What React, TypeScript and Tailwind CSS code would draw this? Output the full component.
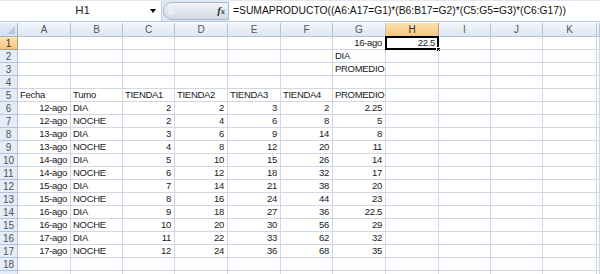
import React from 'react'

const cols = ['A', 'B', 'C', 'D', 'E', 'F', 'G', 'H', 'I', 'J', 'K', '']
const widths = [53, 52, 52, 53, 53, 52, 53, 53, 52, 52, 54, 3]

type Cell = { v: string; right?: boolean }

const data: Record<number, Record<number, Cell>> = {
  1: { 6: { v: '16-ago', right: true }, 7: { v: '22.5', right: true } },
  2: { 6: { v: 'DIA' } },
  3: { 6: { v: 'PROMEDIO' } },
  5: {
    0: { v: 'Fecha' },
    1: { v: 'Turno' },
    2: { v: 'TIENDA1' },
    3: { v: 'TIENDA2' },
    4: { v: 'TIENDA3' },
    5: { v: 'TIENDA4' },
    6: { v: 'PROMEDIO' },
  },
}

const rowsData = [
  ['12-ago', 'DIA', '2', '2', '3', '2', '2.25'],
  ['12-ago', 'NOCHE', '2', '4', '6', '8', '5'],
  ['13-ago', 'DIA', '3', '6', '9', '14', '8'],
  ['13-ago', 'NOCHE', '4', '8', '12', '20', '11'],
  ['14-ago', 'DIA', '5', '10', '15', '26', '14'],
  ['14-ago', 'NOCHE', '6', '12', '18', '32', '17'],
  ['15-ago', 'DIA', '7', '14', '21', '38', '20'],
  ['15-ago', 'NOCHE', '8', '16', '24', '44', '23'],
  ['16-ago', 'DIA', '9', '18', '27', '36', '22.5'],
  ['16-ago', 'NOCHE', '10', '20', '30', '56', '29'],
  ['17-ago', 'DIA', '11', '22', '33', '62', '32'],
  ['17-ago', 'NOCHE', '12', '24', '36', '68', '35'],
]

rowsData.forEach((r, i) => {
  const row: Record<number, Cell> = {}
  r.forEach((v, c) => {
    row[c] = { v, right: c !== 1 }
  })
  data[6 + i] = row
})

const gridCols = `18px ${widths.map(w => `${w}px`).join(' ')}`

export default function App() {
  const rows = Array.from({ length: 19 }, (_, i) => i + 1)
  return (
    <div
      className="w-[600px] h-[274px] overflow-hidden bg-white text-[9.5px] text-[#1a1a1a]"
      style={{ fontFamily: '"Liberation Sans", Arial, sans-serif' }}
    >
      {/* formula bar */}
      <div className="h-[22px] flex items-center bg-[#dfe7f2] border-b border-[#b6c6da]">
        <div className="w-[162px] h-[20px] bg-white border-r border-[#c5d2e0] flex items-center relative">
          <span className="flex-1 text-center text-[11.5px] text-[#222] pl-[4px]">H1</span>
          <span className="absolute right-[5px] top-[8px] w-0 h-0 border-l-[3px] border-r-[3px] border-t-[4px] border-l-transparent border-r-transparent border-t-black" />
        </div>
        <div className="w-[66px] h-[18px] ml-[1px] rounded-l-full bg-gradient-to-b from-[#f4f6f9] to-[#cfd8e3] border border-[#a9b9cc] flex items-center justify-end pr-[3px] relative">
          <span className="absolute left-[4px] top-[4px] w-[6px] h-[8px] rounded-full bg-[#e9edf2]" />
          <span
            className="italic text-[11px] font-bold text-[#333]"
            style={{ fontFamily: '"Liberation Serif", serif' }}
          >
            f<span className="text-[8px]">x</span>
          </span>
        </div>
        <div className="flex-1 h-[20px] bg-white flex items-center pl-[4px] text-[10.3px] text-[#111] whitespace-nowrap overflow-hidden">
          =SUMAPRODUCTO((A6:A17=G1)*(B6:B17=G2)*(C5:G5=G3)*(C6:G17))
        </div>
      </div>

      {/* sheet */}
      <div className="grid mt-[1px]" style={{ gridTemplateColumns: gridCols }}>
        {/* corner */}
        <div className="h-[14px] bg-gradient-to-b from-[#e9eef5] to-[#d4dfee] border-r border-b border-[#9eb6ce] relative">
          <span className="absolute right-[2px] bottom-[2px] w-0 h-0 border-l-[8px] border-b-[8px] border-l-transparent border-b-[#b4c8df]" />
        </div>
        {cols.map((c, i) => (
          <div
            key={c + i}
            className={`h-[14px] flex items-center justify-center border-r border-b text-[10px] ${
              c === 'H'
                ? 'bg-gradient-to-b from-[#fbe3b4] to-[#f6c57a] border-[#c29b5f] text-[#333]'
                : 'bg-gradient-to-b from-[#f3f6fb] to-[#dde6f1] border-[#b3c5da] text-[#555]'
            }`}
          >
            {c}
          </div>
        ))}

        {rows.map(r => (
          <React.Fragment key={r}>
            <div
              className={`h-[13px] flex items-center justify-center border-r border-b text-[10px] ${
                r === 1
                  ? 'bg-gradient-to-b from-[#fbe3b4] to-[#f6c57a] border-[#c29b5f] text-[#333]'
                  : 'bg-[#e4ecf7] border-[#b3c5da] text-[#555]'
              }`}
            >
              {r < 19 ? r : ''}
            </div>
            {cols.map((c, ci) => {
              const cell = data[r]?.[ci]
              const selected = r === 1 && c === 'H'
              return (
                <div
                  key={c + ci}
                  className={`h-[13px] border-r border-b border-[#d0d7e5] flex items-center leading-none tracking-[-0.3px] whitespace-nowrap relative ${
                    cell?.right ? 'justify-end pr-[3px]' : 'pl-[2px]'
                  }`}
                >
                  {cell?.v}
                  {selected && (
                    <>
                      <span className="absolute -left-[1px] -top-[1px] -right-[1px] -bottom-[1px] border-2 border-black pointer-events-none" />
                      <span className="absolute -right-[3px] -bottom-[3px] w-[5px] h-[5px] bg-black border border-white" />
                    </>
                  )}
                </div>
              )
            })}
          </React.Fragment>
        ))}
      </div>
    </div>
  )
}
